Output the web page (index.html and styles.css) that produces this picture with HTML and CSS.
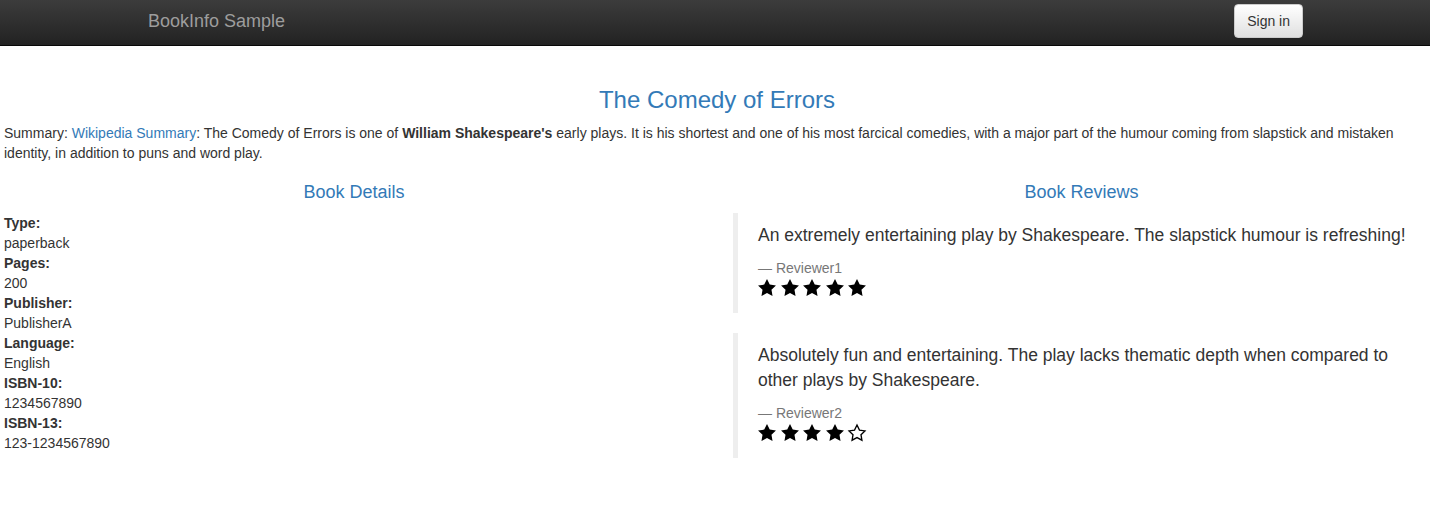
FILE: index.html
```html
<!DOCTYPE html>
<html lang="en">
<head>
<meta charset="utf-8">
<title>Simple Bookstore App</title>
<link rel="stylesheet" href="styles.css">
</head>
<body>
<nav class="navbar">
  <div class="nav-inner">
    <a class="brand" href="#">BookInfo Sample</a>
    <button type="button" class="signin">Sign in</button>
  </div>
</nav>
<main class="page">
  <h3 class="title">The Comedy of Errors</h3>
  <p class="summary">Summary: <a class="link" href="#">Wikipedia Summary</a>: The Comedy of Errors is one of <b>William Shakespeare's</b> early plays. It is his shortest and one of his most farcical comedies, with a major part of the humour coming from slapstick and mistaken identity, in addition to puns and word play.</p>
  <div class="row">
    <section class="col">
      <h4 class="col-title">Book Details</h4>
      <dl class="details">
        <dt>Type:</dt><dd>paperback</dd>
        <dt>Pages:</dt><dd>200</dd>
        <dt>Publisher:</dt><dd>PublisherA</dd>
        <dt>Language:</dt><dd>English</dd>
        <dt>ISBN-10:</dt><dd>1234567890</dd>
        <dt>ISBN-13:</dt><dd>123-1234567890</dd>
      </dl>
    </section>
    <section class="col">
      <h4 class="col-title">Book Reviews</h4>
      <blockquote class="review">
        <p class="review-text">An extremely entertaining play by Shakespeare. The slapstick humour is refreshing!</p>
        <small class="reviewer">Reviewer1</small>
        <div class="stars">
          <svg class="star" viewBox="2 2 20 19"><path class="star-full" d="M12 2l3.09 6.26L22 9.27l-5 4.87 1.18 6.88L12 17.77l-6.18 3.25L7 14.14 2 9.27l6.91-1.010L12 2z"/></svg>
          <svg class="star" viewBox="2 2 20 19"><path class="star-full" d="M12 2l3.09 6.26L22 9.27l-5 4.87 1.18 6.88L12 17.77l-6.18 3.25L7 14.14 2 9.27l6.91-1.010L12 2z"/></svg>
          <svg class="star" viewBox="2 2 20 19"><path class="star-full" d="M12 2l3.09 6.26L22 9.27l-5 4.87 1.18 6.88L12 17.77l-6.18 3.25L7 14.14 2 9.27l6.91-1.010L12 2z"/></svg>
          <svg class="star" viewBox="2 2 20 19"><path class="star-full" d="M12 2l3.09 6.26L22 9.27l-5 4.87 1.18 6.88L12 17.77l-6.18 3.25L7 14.14 2 9.27l6.91-1.010L12 2z"/></svg>
          <svg class="star" viewBox="2 2 20 19"><path class="star-full" d="M12 2l3.09 6.26L22 9.27l-5 4.87 1.18 6.88L12 17.77l-6.18 3.25L7 14.14 2 9.27l6.91-1.010L12 2z"/></svg>
        </div>
      </blockquote>
      <blockquote class="review">
        <p class="review-text">Absolutely fun and entertaining. The play lacks thematic depth when compared to other plays by Shakespeare.</p>
        <small class="reviewer">Reviewer2</small>
        <div class="stars">
          <svg class="star" viewBox="2 2 20 19"><path class="star-full" d="M12 2l3.09 6.26L22 9.27l-5 4.87 1.18 6.88L12 17.77l-6.18 3.25L7 14.14 2 9.27l6.91-1.010L12 2z"/></svg>
          <svg class="star" viewBox="2 2 20 19"><path class="star-full" d="M12 2l3.09 6.26L22 9.27l-5 4.87 1.18 6.88L12 17.77l-6.18 3.25L7 14.14 2 9.27l6.91-1.010L12 2z"/></svg>
          <svg class="star" viewBox="2 2 20 19"><path class="star-full" d="M12 2l3.09 6.26L22 9.27l-5 4.87 1.18 6.88L12 17.77l-6.18 3.25L7 14.14 2 9.27l6.91-1.010L12 2z"/></svg>
          <svg class="star" viewBox="2 2 20 19"><path class="star-full" d="M12 2l3.09 6.26L22 9.27l-5 4.87 1.18 6.88L12 17.77l-6.18 3.25L7 14.14 2 9.27l6.91-1.010L12 2z"/></svg>
          <svg class="star" viewBox="2 2 20 19"><path class="star-empty" d="M12 3.2l2.75 5.57 6.15.9-4.45 4.33 1.05 6.12L12 17.23l-5.5 2.89 1.05-6.12L3.1 9.67l6.15-.9L12 3.2z"/></svg>
        </div>
      </blockquote>
    </section>
  </div>
</main>
</body>
</html>
```
FILE: styles.css
```css
* { box-sizing: border-box; }

html, body {
  margin: 0;
  padding: 0;
  background: #fff;
}

body {
  font-family: "Liberation Sans", Arial, Helvetica, sans-serif;
  font-size: 14px;
  line-height: 20px;
  color: #333;
}

.navbar {
  height: 46px;
  background: linear-gradient(to bottom, #3c3c3c 0%, #222 100%);
  border-bottom: 1px solid #080808;
}

.nav-inner {
  display: flex;
  justify-content: space-between;
  align-items: flex-start;
  height: 100%;
  padding: 0 127px 0 148px;
}

.brand {
  padding-top: 11px;
  font-size: 18px;
  line-height: 20px;
  color: #9d9d9d;
  text-decoration: none;
}

.signin {
  margin-top: 4px;
  height: 34px;
  padding: 6px 12px;
  font-family: inherit;
  font-size: 14px;
  line-height: 20px;
  color: #333;
  border: 1px solid #ccc;
  border-radius: 4px;
  background: linear-gradient(to bottom, #fff 0%, #e0e0e0 100%);
  box-shadow: inset 0 1px 0 rgba(255,255,255,.15), 0 1px 1px rgba(0,0,0,.075);
  cursor: pointer;
}

.page {
  padding: 21px 0 0 4px;
}

.title {
  margin: 20px 0 10px;
  font-size: 24px;
  line-height: 1.1;
  font-weight: 400;
  text-align: center;
  color: #337ab7;
}

.summary {
  margin: 0 0 10px;
}

.link {
  color: #337ab7;
  text-decoration: none;
}

.row {
  display: grid;
  grid-template-columns: 700px 1fr;
  column-gap: 29px;
}

.col-title {
  margin: 10px 0;
  font-size: 18px;
  line-height: 1.1;
  font-weight: 400;
  text-align: center;
  color: #337ab7;
}

.details {
  margin: 0 0 20px;
}

.details dt {
  font-weight: 700;
}

.details dd {
  margin: 0;
}

.review {
  margin: 0 0 20px;
  padding: 10px 20px;
  border-left: 5px solid #eee;
  font-size: 17.5px;
}

.review-text {
  margin: 0 0 10px;
  line-height: 25px;
}

.reviewer {
  display: block;
  font-size: 14px;
  line-height: 20px;
  color: #777;
}

.reviewer::before {
  content: "\2014\00A0";
}

.stars {
  display: flex;
  gap: 4.5px;
  height: 25px;
  padding-top: 1px;
  align-items: flex-start;
}

.star {
  display: block;
  width: 18px;
  height: 17px;
  overflow: visible;
}

.star-full {
  fill: #000;
}

.star-empty {
  fill: none;
  stroke: #000;
  stroke-width: 1.5;
  stroke-linejoin: miter;
}
```
